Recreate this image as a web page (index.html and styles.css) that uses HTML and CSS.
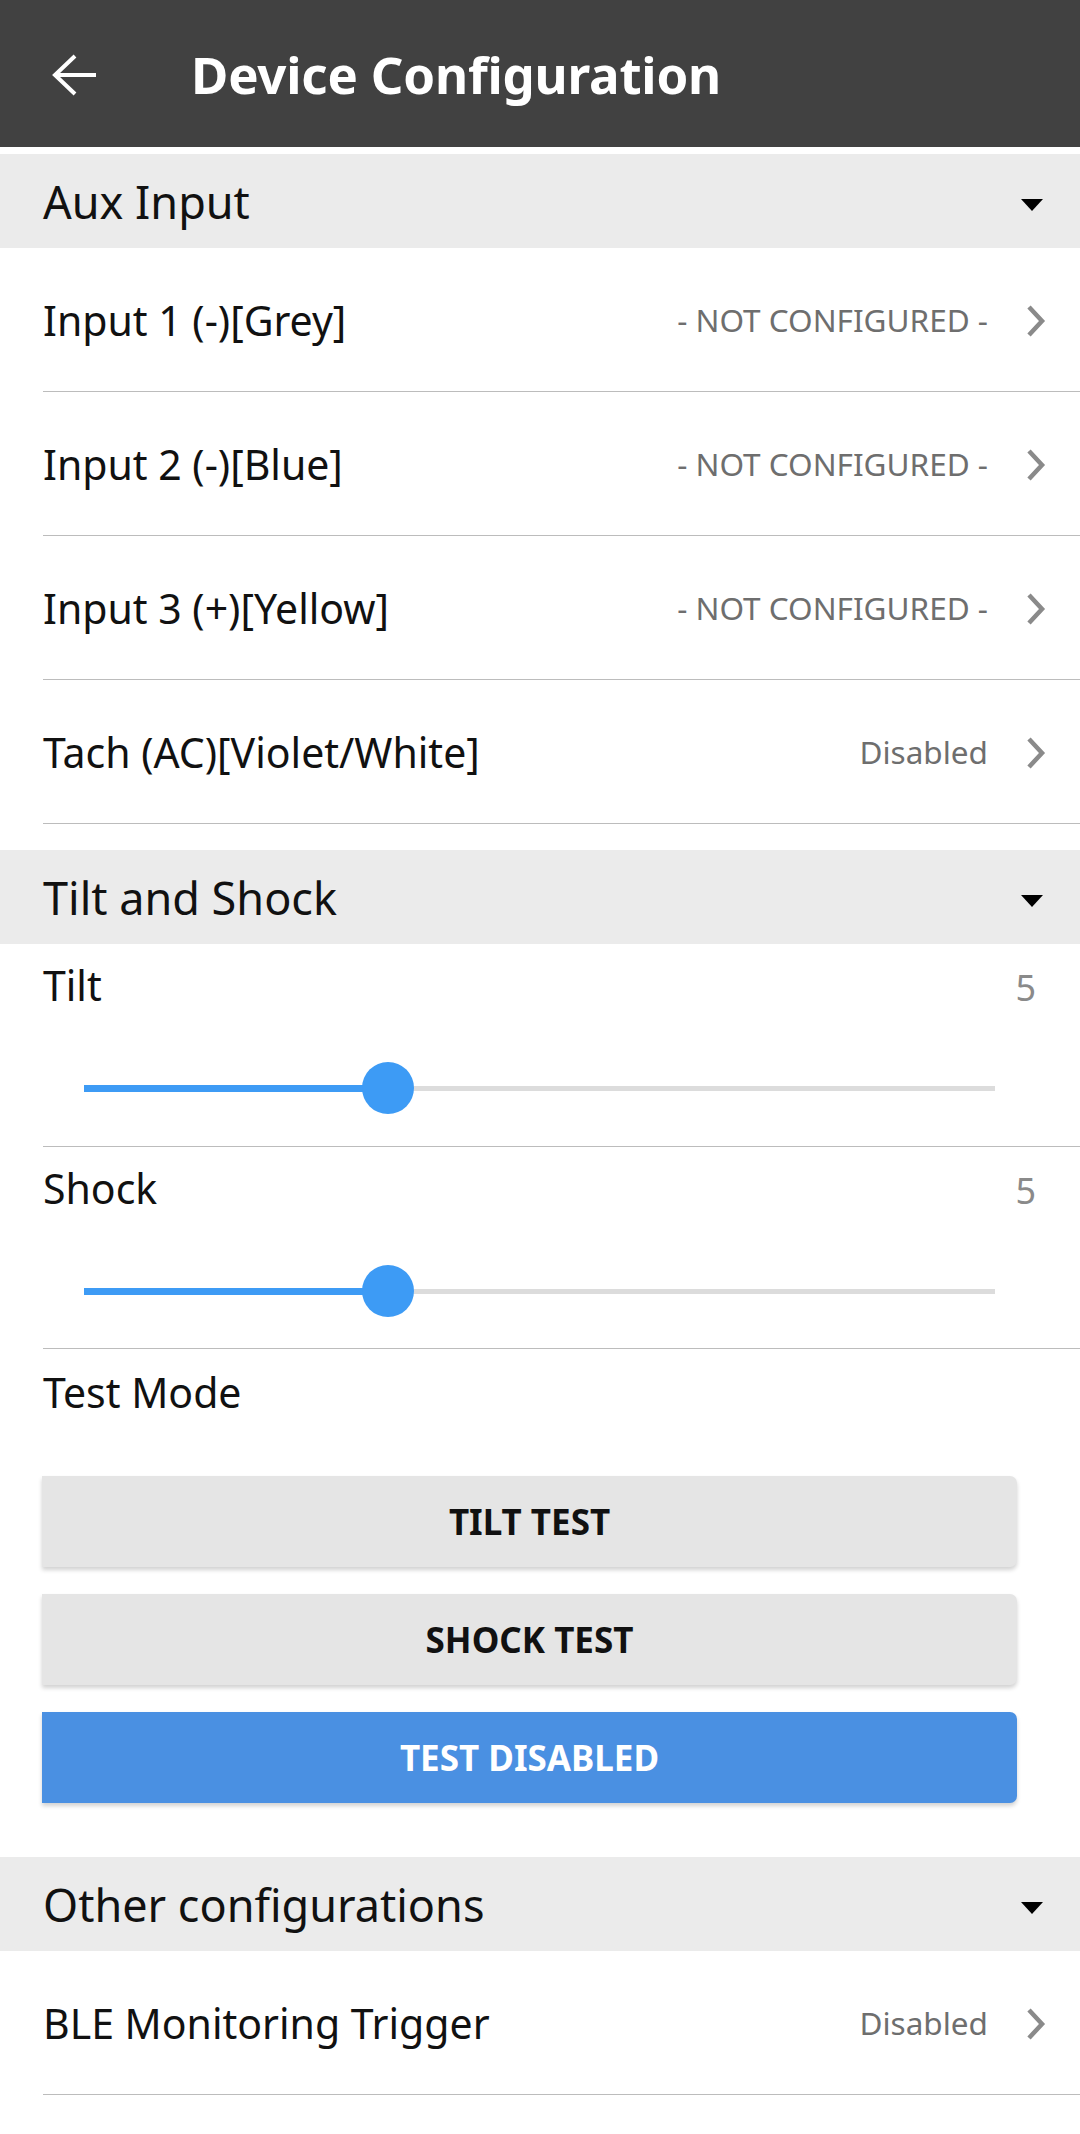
FILE: index.html
```html
<!DOCTYPE html>
<html>
<head>
<meta charset="utf-8">
<link rel="stylesheet" href="styles.css">
</head>
<body>
<header class="appbar">
  <svg class="back" viewBox="0 0 46 42" width="46" height="42"><path d="M45 21H4 M24 2L4 21L24 40" fill="none" stroke="#fff" stroke-width="4"/></svg>
  <h1 class="title">Device Configuration</h1>
</header>

<section class="group first">
  <div class="group-head"><span class="group-title">Aux Input</span><span class="caret"></span></div>
  <div class="row"><span class="row-label">Input 1 (-)[Grey]</span><span class="row-value">- NOT CONFIGURED -</span><svg class="chev" viewBox="0 0 20 32" width="20" height="32"><path d="M3 2L16 16L3 30" fill="none" stroke="#8a8a8a" stroke-width="4.5"/></svg></div>
  <div class="row"><span class="row-label">Input 2 (-)[Blue]</span><span class="row-value">- NOT CONFIGURED -</span><svg class="chev" viewBox="0 0 20 32" width="20" height="32"><path d="M3 2L16 16L3 30" fill="none" stroke="#8a8a8a" stroke-width="4.5"/></svg></div>
  <div class="row"><span class="row-label">Input 3 (+)[Yellow]</span><span class="row-value">- NOT CONFIGURED -</span><svg class="chev" viewBox="0 0 20 32" width="20" height="32"><path d="M3 2L16 16L3 30" fill="none" stroke="#8a8a8a" stroke-width="4.5"/></svg></div>
  <div class="row"><span class="row-label">Tach (AC)[Violet/White]</span><span class="row-value">Disabled</span><svg class="chev" viewBox="0 0 20 32" width="20" height="32"><path d="M3 2L16 16L3 30" fill="none" stroke="#8a8a8a" stroke-width="4.5"/></svg></div>
</section>

<section class="group">
  <div class="group-head"><span class="group-title">Tilt and Shock</span><span class="caret"></span></div>
  <div class="slider-item">
    <div class="slider-top"><span class="row-label">Tilt</span><span class="slider-val">5</span></div>
    <div class="slider">
      <div class="track"><div class="fill" style="width:33.4%"></div></div>
      <div class="thumb" style="left:33.4%"></div>
    </div>
  </div>
  <div class="slider-item">
    <div class="slider-top"><span class="row-label">Shock</span><span class="slider-val">5</span></div>
    <div class="slider">
      <div class="track"><div class="fill" style="width:33.4%"></div></div>
      <div class="thumb" style="left:33.4%"></div>
    </div>
  </div>
  <div class="test-mode">
    <div class="row-label">Test Mode</div>
    <div class="buttons">
      <button class="btn">TILT TEST</button>
      <button class="btn">SHOCK TEST</button>
      <button class="btn btn-primary">TEST DISABLED</button>
    </div>
  </div>
</section>

<section class="group other">
  <div class="group-head"><span class="group-title">Other configurations</span><span class="caret"></span></div>
  <div class="row"><span class="row-label">BLE Monitoring Trigger</span><span class="row-value">Disabled</span><svg class="chev" viewBox="0 0 20 32" width="20" height="32"><path d="M3 2L16 16L3 30" fill="none" stroke="#8a8a8a" stroke-width="4.5"/></svg></div>
</section>
</body>
</html>
```
FILE: styles.css
```css
* { box-sizing: border-box; }
html, body { margin: 0; padding: 0; background: #fff; }
body {
  font-family: "Noto Sans", "Open Sans", "Liberation Sans", sans-serif;
  color: #111;
}

.appbar {
  height: 147px;
  background: #414141;
  display: flex;
  align-items: center;
  padding-left: 51px;
}
.back { display: block; margin-top: 2px; }
.title {
  margin: 0 0 0 94px;
  font-size: 51px;
  font-weight: 700;
  color: #fff;
  letter-spacing: -0.2px;
}

.group.first { margin-top: 7px; }
.group { margin-top: 26px; }
.group.other { margin-top: 54px; }

.group-head {
  height: 94px;
  background: #ebebeb;
  display: flex;
  align-items: center;
  justify-content: space-between;
  padding: 0 37px 0 43px;
}
.group-title { font-size: 45px; font-weight: 400; }
.caret {
  width: 0; height: 0;
  border-left: 11px solid transparent;
  border-right: 11px solid transparent;
  border-top: 12px solid #000;
  margin-top: 8px;
}

.row {
  height: 144px;
  margin-left: 43px;
  border-bottom: 1px solid #bcbcbc;
  display: flex;
  align-items: center;
  padding-right: 34px;
}
.row-label { font-size: 41px; font-weight: 400; color: #111; }
.row-value {
  margin-left: auto;
  font-size: 31.5px;
  color: #6e6e6e;
  margin-right: 38px;
}
.chev { display: block; margin-top: 2px; }

.slider-item {
  margin-left: 43px;
  border-bottom: 1px solid #bcbcbc;
  padding-top: 17px;
  height: 203px;
}
.slider-item + .slider-item { height: 202px; }
.slider-top {
  display: flex;
  align-items: baseline;
  justify-content: space-between;
  padding-right: 44px;
  line-height: 48px;
}
.slider-val { font-size: 36px; color: #8a8a8a; }
.slider {
  position: relative;
  margin: 50px 0 0 41px;
  width: 911px;
  height: 52px;
  display: flex;
  align-items: center;
}
.track {
  width: 100%;
  height: 5px;
  background: #dcdcdc;
}
.fill { height: 7px; margin-top: -1px; background: #3d9bf5; }
.thumb {
  position: absolute;
  top: 0;
  width: 52px;
  height: 52px;
  margin-left: -26px;
  border-radius: 50%;
  background: #3d9bf5;
}

.test-mode { padding-top: 19px; margin-left: 43px; }
.test-mode .row-label { line-height: 48px; }
.buttons {
  margin-top: 60px;
  width: 975px;
  margin-left: -1px;
  display: flex;
  flex-direction: column;
  gap: 27px;
}
.btn {
  height: 91px;
  border: none;
  border-radius: 0 7px 7px 0;
  background: #e5e5e5;
  font-family: "Noto Sans", "Open Sans", "Liberation Sans", sans-serif;
  font-size: 35px;
  font-weight: 700;
  color: #111;
  box-shadow: 0 3px 4px rgba(0,0,0,0.18);
  padding: 0;
}
.btn-primary { background: #4a90e2; color: #fff; }
```
